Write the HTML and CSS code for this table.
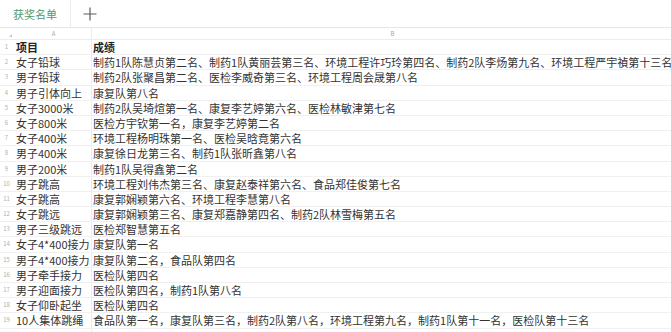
FILE: index.html
```html
<!DOCTYPE html>
<html lang="zh">
<head>
<meta charset="utf-8">
<link rel="stylesheet" href="styles.css">
</head>
<body>
<div class="page">
  <div class="tabs">
    <div class="tab active">获奖名单</div>
    <div class="tab add">
      <svg width="14" height="14" viewBox="0 0 14 14"><path d="M7 0.5V13.5M0.5 7H13.5" stroke="#5a5a5a" stroke-width="1.2" fill="none"/></svg>
    </div>
  </div>
  <div class="sheet">
    <div class="row head">
      <div class="num corner"><span class="tri"></span></div>
      <div class="cell a">A</div>
      <div class="cell b">B</div>
    </div>
    <div class="row bold"><div class="num">1</div><div class="cell a">项目</div><div class="cell b">成绩</div></div>
    <div class="row"><div class="num">2</div><div class="cell a">女子铅球</div><div class="cell b">制药1队陈慧贞第二名、制药1队黄丽芸第三名、环境工程许巧玲第四名、制药2队李炀第九名、环境工程严宇禎第十三名</div></div>
    <div class="row"><div class="num">3</div><div class="cell a">男子铅球</div><div class="cell b">制药2队张聚昌第二名、医检李威奇第三名、环境工程周会晟第八名</div></div>
    <div class="row"><div class="num">4</div><div class="cell a">男子引体向上</div><div class="cell b">康复队第八名</div></div>
    <div class="row"><div class="num">5</div><div class="cell a">女子3000米</div><div class="cell b">制药2队吴埼煊第一名、康复李艺婷第六名、医检林敏津第七名</div></div>
    <div class="row"><div class="num">6</div><div class="cell a">女子800米</div><div class="cell b">医检方宇钦第一名，康复李艺婷第二名</div></div>
    <div class="row"><div class="num">7</div><div class="cell a">女子400米</div><div class="cell b">环境工程杨明珠第一名、医检吴晗竟第六名</div></div>
    <div class="row"><div class="num">8</div><div class="cell a">男子400米</div><div class="cell b">康复徐日龙第三名、制药1队张昕鑫第八名</div></div>
    <div class="row"><div class="num">9</div><div class="cell a">男子200米</div><div class="cell b">制药1队吴得鑫第二名</div></div>
    <div class="row"><div class="num">10</div><div class="cell a">男子跳高</div><div class="cell b">环境工程刘伟杰第三名、康复赵泰祥第六名、食品郑佳俊第七名</div></div>
    <div class="row"><div class="num">11</div><div class="cell a">女子跳高</div><div class="cell b">康复郭娴颖第六名、环境工程李慧第八名</div></div>
    <div class="row"><div class="num">12</div><div class="cell a">女子跳远</div><div class="cell b">康复郭娴颖第三名、康复郑嘉静第四名、制药2队林雪梅第五名</div></div>
    <div class="row"><div class="num">13</div><div class="cell a">男子三级跳远</div><div class="cell b">医检郑智慧第五名</div></div>
    <div class="row"><div class="num">14</div><div class="cell a">女子4*400接力</div><div class="cell b">康复队第一名</div></div>
    <div class="row"><div class="num">15</div><div class="cell a">男子4*400接力</div><div class="cell b">康复队第二名，食品队第四名</div></div>
    <div class="row"><div class="num">16</div><div class="cell a">男子牵手接力</div><div class="cell b">医检队第四名</div></div>
    <div class="row"><div class="num">17</div><div class="cell a">男子迎面接力</div><div class="cell b">医检队第四名，制药1队第八名</div></div>
    <div class="row"><div class="num">18</div><div class="cell a">女子仰卧起坐</div><div class="cell b">医检队第四名</div></div>
    <div class="row"><div class="num">19</div><div class="cell a">10人集体跳绳</div><div class="cell b">食品队第一名，康复队第三名，制药2队第八名，环境工程第九名，制药1队第十一名，医检队第十三名</div></div>
    <div class="row"><div class="num">20</div><div class="cell a"></div><div class="cell b"></div></div>
  </div>
</div>
</body>
</html>
```
FILE: styles.css
```css
html, body {
  margin: 0;
  padding: 0;
  background: #ffffff;
  overflow: hidden;
}
.page {
  width: 671px;
  height: 332px;
  overflow: hidden;
  font-family: "Noto Sans CJK SC", "Noto Sans", sans-serif;
  color: #333333;
}
.tabs {
  display: flex;
  height: 28px;
  border-bottom: 1px solid #e6e6e6;
  box-sizing: border-box;
}
.tab {
  display: flex;
  align-items: center;
  justify-content: center;
  height: 100%;
}
.tab.active {
  width: 71px;
  border-right: 1px solid #ececec;
  box-sizing: border-box;
  color: #4f9a6e;
  font-size: 11px;
  letter-spacing: 0;
}
.tab.add {
  width: 38px;
}
.sheet {
  display: flex;
  flex-direction: column;
}
.row {
  display: grid;
  grid-template-columns: 13px 79px 600px;
  height: 15.2px;
  border-bottom: 1px solid #f0f0f0;
  box-sizing: border-box;
  font-size: 11px;
  line-height: 14px;
  white-space: nowrap;
}
.row.head {
  height: 12px;
  line-height: 11px;
  border-bottom: 1px solid #ececec;
}
.num {
  font-size: 6px;
  color: #b0b0b0;
  text-align: center;
  line-height: 14px;
}
.head .num, .head .cell {
  font-size: 6px;
  color: #a8a8a8;
  text-align: center;
  line-height: 11px;
}
.corner {
  position: relative;
}
.tri {
  position: absolute;
  right: 1px;
  bottom: 2px;
  width: 0;
  height: 0;
  border-left: 3px solid transparent;
  border-bottom: 3px solid #c8c8c8;
}
.cell {
  overflow: hidden;
}
.cell.a {
  padding-left: 3px;
  border-right: 1px solid #ececec;
  overflow: visible;
}
.cell.b {
  padding-left: 1px;
}
.bold .cell {
  font-weight: 700;
  color: #222222;
}
```
